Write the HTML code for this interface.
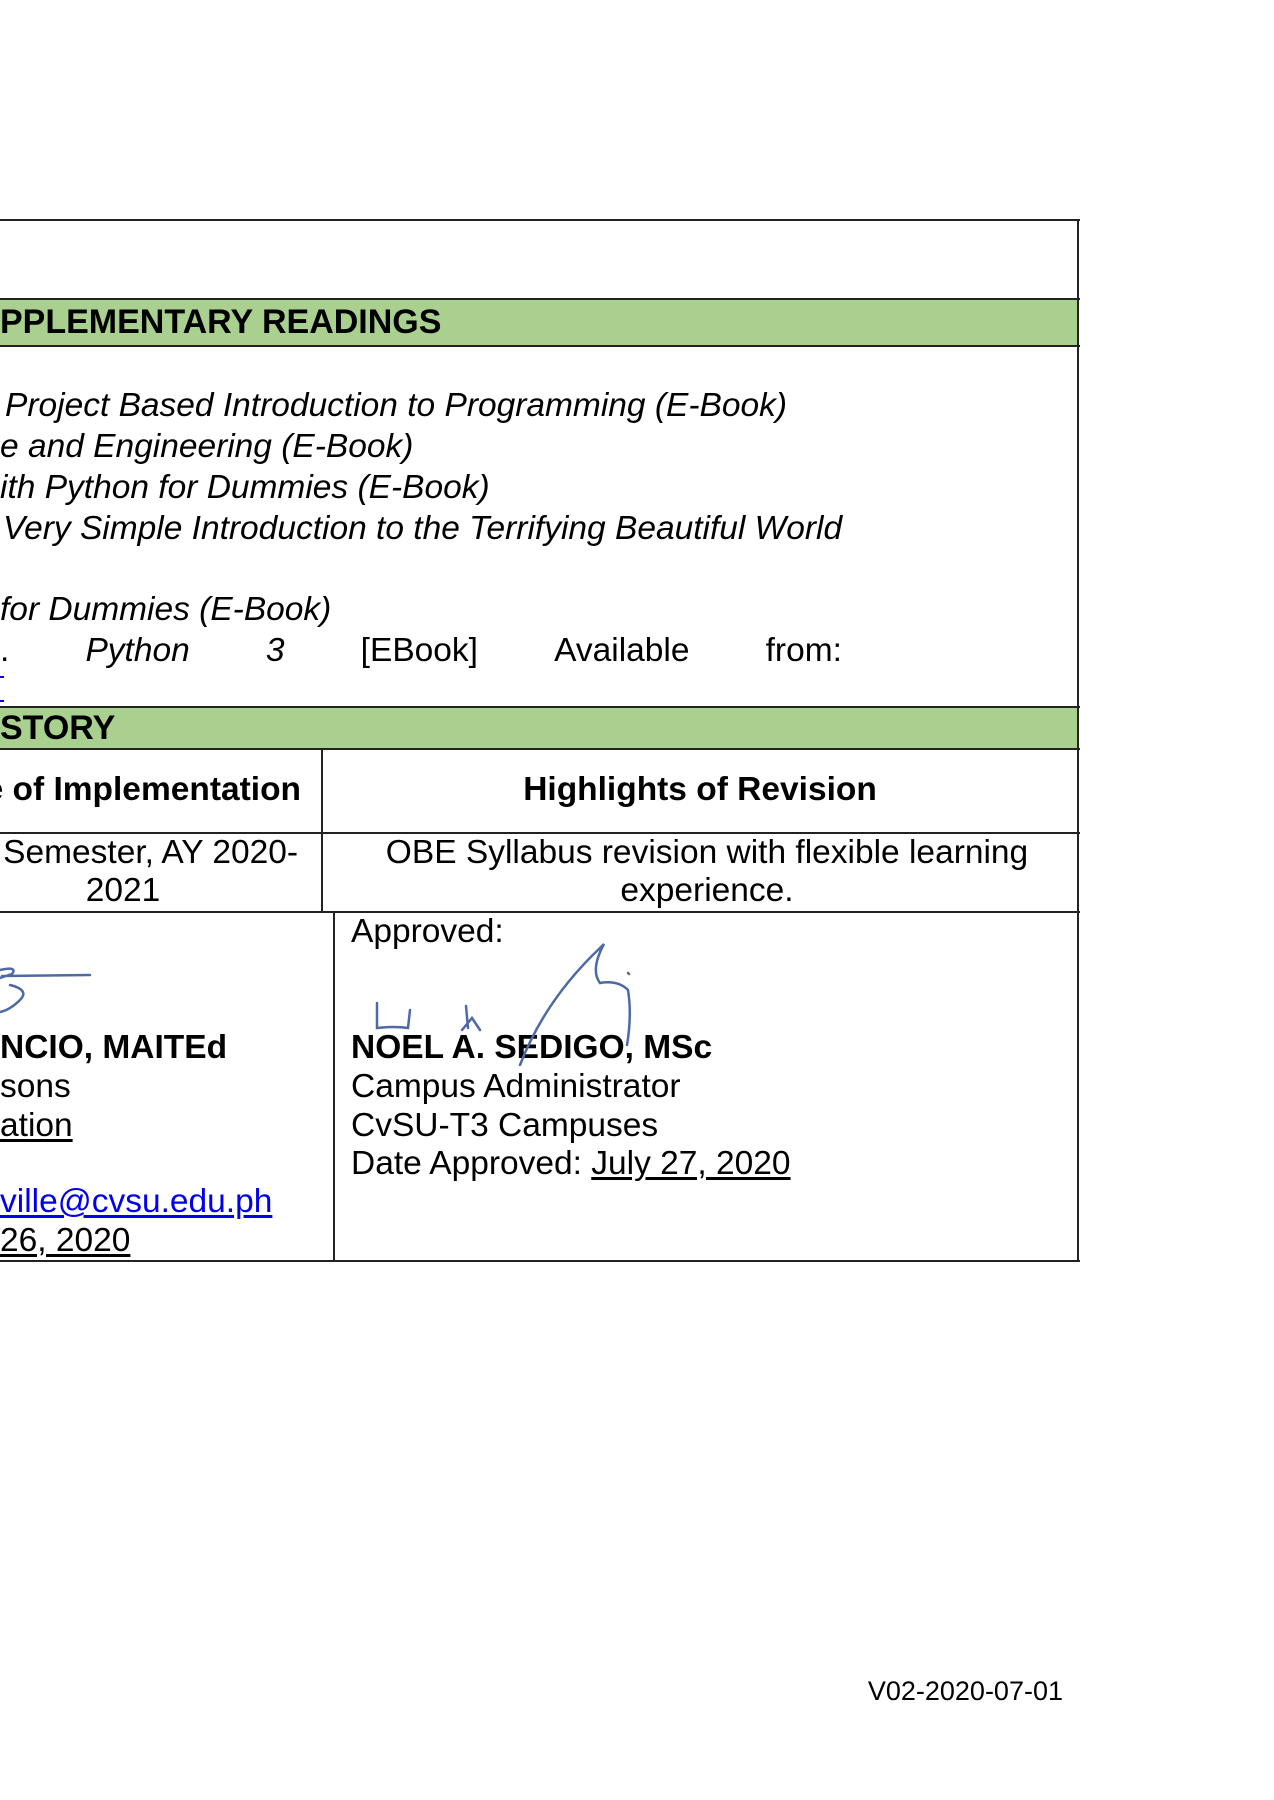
<!DOCTYPE html>
<html><head><meta charset="utf-8"><style>
body{margin:0;width:1274px;height:1800px;background:#fff;position:relative;overflow:hidden;font-family:"Liberation Sans",Arial,sans-serif;color:#000}
.a{position:absolute;white-space:nowrap}
.hl{position:absolute;height:2px;background:#222}
.vl{position:absolute;width:2px;background:#222}
.g{position:absolute;left:0;width:1078px;background:#a9d08e}
.b{font-weight:bold}
.i{font-style:italic}
.t{font-size:33.5px;line-height:34px}
u{text-decoration:underline;text-underline-offset:3px}
.lk{color:#0000ee}
</style></head><body>
<div class="g" style="top:299px;height:46px"></div>
<div class="g" style="top:707px;height:41px"></div>
<div class="hl" style="left:0;width:1080px;top:219px"></div>
<div class="hl" style="left:0;width:1080px;top:298px"></div>
<div class="hl" style="left:0;width:1080px;top:345px"></div>
<div class="hl" style="left:0;width:1080px;top:706px"></div>
<div class="hl" style="left:0;width:1080px;top:748px"></div>
<div class="hl" style="left:0;width:1080px;top:832px"></div>
<div class="hl" style="left:0;width:1080px;top:911px"></div>
<div class="hl" style="left:0;width:1080px;top:1260px"></div>
<div class="vl" style="left:1077px;top:219px;height:1043px"></div>
<div class="vl" style="left:321px;top:748px;height:164px"></div>
<div class="vl" style="left:333px;top:912px;height:349px"></div>

<div class="a b t" style="left:0;top:305px;font-size:34px">PPLEMENTARY READINGS</div>
<div class="a i t" style="left:5px;top:389px">Project Based Introduction to Programming (E-Book)</div>
<div class="a i t" style="left:0;top:430px">e and Engineering (E-Book)</div>
<div class="a i t" style="left:0;top:471px">ith Python for Dummies (E-Book)</div>
<div class="a i t" style="left:3px;top:512px">Very Simple Introduction to the Terrifying Beautiful World</div>
<div class="a i t" style="left:0;top:593px">for Dummies (E-Book)</div>
<div class="a t" style="left:0;top:634px;width:842px;display:flex;justify-content:space-between"><span>.</span><span class="i">Python</span><span class="i">3</span><span>[EBook]</span><span>Available</span><span>from:</span></div>
<div class="a" style="left:0;top:676px;width:4px;height:2px;background:#00e"></div>
<div class="a" style="left:0;top:700px;width:4px;height:2px;background:#00e"></div>
<div class="a b t" style="left:0;top:711px;font-size:34px">STORY</div>

<div class="a b t" style="right:973px;top:773px">e of Implementation</div>
<div class="a b t" style="left:322px;width:756px;text-align:center;top:773px">Highlights of Revision</div>
<div class="a t" style="right:976px;top:836px">Semester, AY 2020-</div>
<div class="a t" style="left:0;width:246px;text-align:center;top:874px">2021</div>
<div class="a t" style="left:322px;width:770px;text-align:center;top:836px">OBE Syllabus revision with flexible learning</div>
<div class="a t" style="left:322px;width:770px;text-align:center;top:874px">experience.</div>

<div class="a t" style="left:351px;top:915px">Approved:</div>
<div class="a b t" style="left:351px;top:1031px">NOEL A. SEDIGO, MSc</div>
<div class="a t" style="left:351px;top:1070px">Campus Administrator</div>
<div class="a t" style="left:351px;top:1109px">CvSU-T3 Campuses</div>
<div class="a t" style="left:351px;top:1147px">Date Approved: <u>July 27, 2020</u></div>
<div class="a b t" style="left:0;top:1031px">NCIO, MAITEd</div>
<div class="a t" style="left:0;top:1070px">sons</div>
<div class="a t" style="left:0;top:1109px"><u>ation</u></div>
<div class="a t lk" style="left:0;top:1185px"><u>ville@cvsu.edu.ph</u></div>
<div class="a t" style="left:0;top:1224px"><u>26, 2020</u></div>

<svg class="a" style="left:0;top:940px" width="700" height="140" viewBox="0 0 700 140" fill="none" stroke="#4d6aa6" stroke-width="2.5" stroke-linecap="round">
<path d="M0 30 Q18 26 12 34 L0 38 M2 36 L90 35 M10 45 Q30 50 20 60 Q10 70 0 72"/>
<path d="M377 63 L377 88 Q395 86 408 88 L410 70 M466 66 L468 88 M462 90 L472 78 L480 90 M520 125 Q545 60 600 8 L604 4 Q590 30 600 43 Q618 40 628 50 Q632 75 627 105 M628 33 L629 34"/>
</svg>

<div class="a" style="right:211px;top:1676px;font-size:27px">V02-2020-07-01</div>
</body></html>
